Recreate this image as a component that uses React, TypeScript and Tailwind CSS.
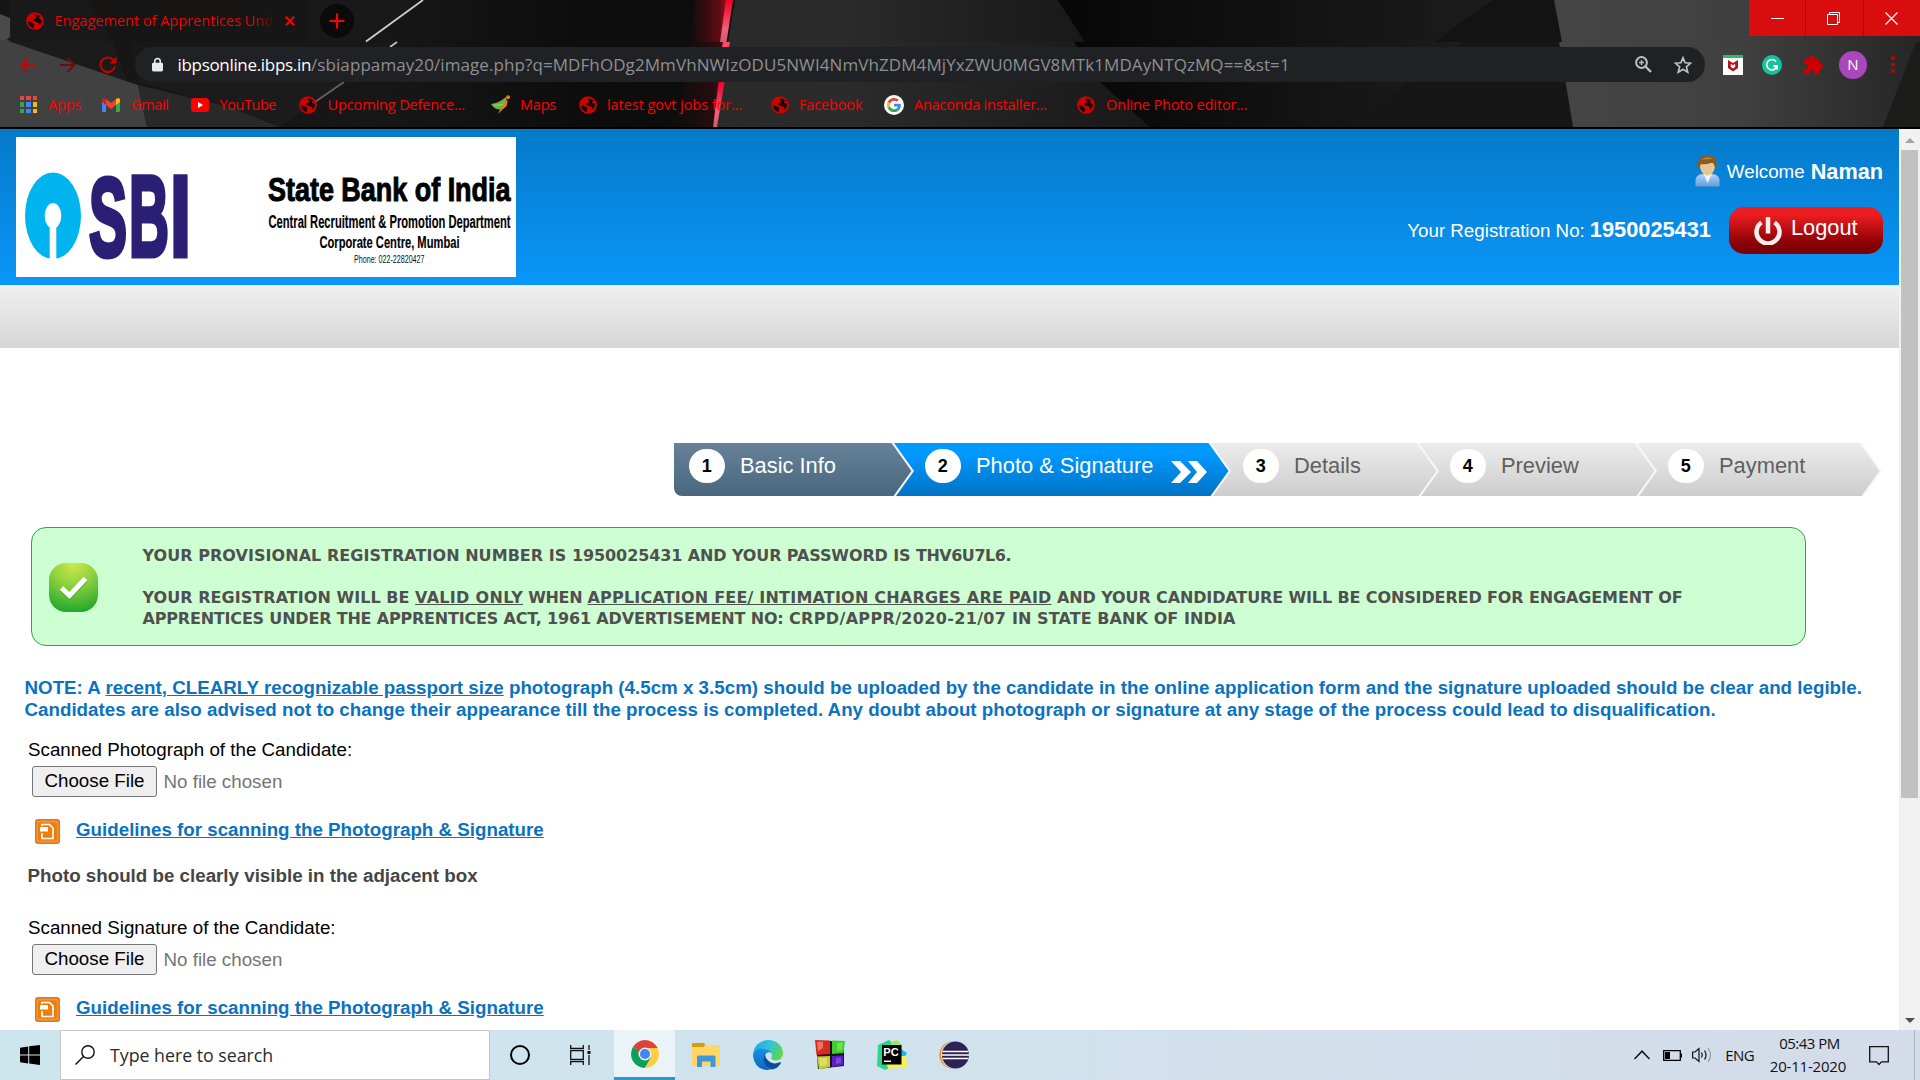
import type { ReactNode } from "react";

const ui = "font-['Open_Sans','Noto_Sans',sans-serif]";

function Globe() {
  return (
    <svg viewBox="0 0 18 18" className="h-[18px] w-[18px] shrink-0">
      <circle cx="9" cy="9" r="8.8" fill="#cf0000" />
      <path d="M8.8 2.4 L12.6 3 L14.6 5 L12.8 5.4 L13.6 7.2 L16 8 L15.400 11 L13.6 13.6 L12.8 11.4 L11 10 L8.2 9.4 L6.8 8.2 L8.4 6.8 L10.2 6.6 L9.6 4.6 Z" fill="#140808" />
      <path d="M1.8 9 L4.4 9.800 L6.8 11 L8.6 12.6 L7.8 14 L7.4 16.200 L5 15 L2.8 12.8 Z" fill="#140808" />
    </svg>
  );
}

function TopArt() {
  return (
    <svg viewBox="0 0 1920 127" preserveAspectRatio="none" className="absolute inset-0 h-[127px] w-full">
      <defs>
        <linearGradient id="base" x1="0" x2="1">
          <stop offset="0" stopColor="#161514" />
          <stop offset=".2" stopColor="#181717" />
          <stop offset=".3" stopColor="#0e0d0d" />
          <stop offset="1" stopColor="#0a0a0a" />
        </linearGradient>
        <linearGradient id="mid" x1="0" x2="1">
          <stop offset="0" stopColor="#2a2a2a" />
          <stop offset=".3" stopColor="#2b2b2b" />
          <stop offset="1" stopColor="#181818" />
        </linearGradient>
        <linearGradient id="glow" x1="0" x2="1">
          <stop offset="0" stopColor="#7a0b14" stopOpacity="0" />
          <stop offset=".75" stopColor="#7a0b14" stopOpacity=".75" />
          <stop offset="1" stopColor="#c01020" />
        </linearGradient>
        <linearGradient id="neon" x1="0" x2="0" y1="0" y2="1">
          <stop offset="0" stopColor="#f5002a" />
          <stop offset=".32" stopColor="#f02a4a" />
          <stop offset=".7" stopColor="#f06078" />
          <stop offset="1" stopColor="#d05a70" />
        </linearGradient>
        <linearGradient id="slate" x1="0" x2="1">
          <stop offset="0" stopColor="#454545" />
          <stop offset=".5" stopColor="#404040" />
          <stop offset="1" stopColor="#262626" />
        </linearGradient>
        <linearGradient id="shade" x1="0" x2="1">
          <stop offset="0" stopColor="#070707" />
          <stop offset="1" stopColor="#1c1c1c" />
        </linearGradient>
      </defs>
      <rect width="1920" height="127" fill="url(#base)" />
      <path d="M10 0H88L112 42H10Z" fill="#1a1919" />
      <path d="M0 14L10 18V36Q9 41 0 41Z" fill="#4a4a4a" />
      <path d="M0 40L8 40L138 85L147 127H0Z" fill="#414141" />
      <path d="M112 42L127 80L138 85L8 41Z" fill="#1c1b1b" />
      <path d="M138 85L230 107L280 127H147Z" fill="#292929" />
      <path d="M130 42H398L345 82H138Z" fill="#191818" />
      <path d="M310 42V12Q310 0 300 0H423L366 42Z" fill="#1a1919" />
      <path d="M138 82H344L280 127L230 107Z" fill="#1c1b1b" />
      <path d="M423 0L366 41.500" stroke="#d0d0d0" strokeWidth="1.800" />
      <path d="M397 42L390 47" stroke="#c0c0c0" strokeWidth="1.800" />
      <path d="M344 82L315 102" stroke="#666" strokeWidth="1.600" />
      <path d="M695 0H729L721 42H690Z" fill="url(#glow)" />
      <path d="M692 42H725L712 127H675Z" fill="url(#glow)" opacity=".3" />
      <path d="M735 0H1058L1085 42H728Z" fill="url(#mid)" />
      <path d="M729 42H1074L1100 82L1150 127H716Z" fill="url(#mid)" />
      <path d="M1058 0H1493L1435 42H1085Z" fill="url(#shade)" />
      <path d="M1074 42H1465L1348 127H1150L1100 82Z" fill="url(#shade)" />
      <path d="M726 0H733L726.500 42H720Z" fill="url(#neon)" />
      <path d="M723 42H730L729 47H722Z" fill="#ff4a6a" />
      <path d="M718.500 82H724.500L717 127H713Z" fill="url(#neon)" />
      <path d="M1493 0H1554L1562 42H1435Z" fill="#131313" />
      <path d="M1465 42H1559L1573 127H1348Z" fill="#161616" />
      <path d="M1554 0H1920V42H1562Z" fill="url(#slate)" />
      <path d="M1559 42H1920V127H1573Z" fill="url(#slate)" />
      <path d="M1916 42H1920V127H1883Z" fill="#1c1c1b" />
    </svg>
  );
}

function AppsIcon() {
  const c = ["#e8453c", "#e8453c", "#e8453c", "#30a853", "#4285f4", "#fbbc05", "#30a853", "#4285f4", "#fbbc05"];
  return (
    <span className="grid h-[17px] w-[17px] grid-cols-3 gap-[2px]">
      {c.map((x, i) => (
        <span key={i} style={{ background: x }} />
      ))}
    </span>
  );
}

function GmailIcon() {
  return (
    <svg viewBox="0 0 18 14" className="h-[14px] w-[18px]">
      <path d="M0 2V13a1 1 0 0 0 1 1H4V5Z" fill="#4285f4" />
      <path d="M18 2V13a1 1 0 0 1-1 1H14V5Z" fill="#34a853" />
      <path d="M14 1L16 0Q18 0 18 2V4L14 7Z" fill="#fbbc04" />
      <path d="M4 1L2 0Q0 0 0 2V4L4 7Z" fill="#c5221f" />
      <path d="M4 1L9 5L14 1V7L9 11L4 7Z" fill="#ea4335" />
    </svg>
  );
}

function YouTubeIcon() {
  return (
    <svg viewBox="0 0 18 14" className="h-[14px] w-[18px]">
      <rect width="18" height="14" rx="3" fill="#f00" />
      <path d="M7 4L12 7L7 10Z" fill="#fff" />
    </svg>
  );
}

function MapsIcon() {
  return (
    <svg viewBox="0 0 20 20" className="h-5 w-5">
      <path d="M0 9Q8 8 15 2Q16 10 11 14Q4 16 0 9Z" fill="#6db33f" />
      <path d="M16 4Q18 11 12 14L7 19Q9 14 12 11Q14 8 16 4Z" fill="#f0761c" />
      <circle cx="17" cy="2.200" r="2" fill="#f0761c" />
      <path d="M3 10Q8 11 12 9" stroke="#a8d46a" fill="none" />
    </svg>
  );
}

function GoogleIcon() {
  return (
    <svg viewBox="0 0 48 48" className="h-5 w-5">
      <circle cx="24" cy="24" r="24" fill="#fff" />
      <g transform="translate(7 7) scale(.71)">
        <path fill="#EA4335" d="M24 9.500c3.540 0 6.710 1.220 9.210 3.600l6.850-6.850C35.900 2.380 30.470 0 24 0 14.620 0 6.510 5.380 2.560 13.220l7.980 6.190C12.430 13.720 17.740 9.500 24 9.500z" />
        <path fill="#4285F4" d="M46.980 24.550c0-1.570-.15-3.090-.38-4.550H24v9.020h12.940c-.58 2.960-2.260 5.480-4.780 7.180l7.730 6c4.510-4.180 7.090-10.360 7.090-17.650z" />
        <path fill="#FBBC05" d="M10.530 28.590c-.48-1.450-.76-2.990-.76-4.590s.27-3.140.76-4.590l-7.980-6.190C.92 16.460 0 20.120 0 24c0 3.880.92 7.540 2.560 10.780l7.970-6.190z" />
        <path fill="#34A853" d="M24 48c6.480 0 11.930-2.130 15.890-5.810l-7.730-6c-2.150 1.450-4.920 2.300-8.160 2.300-6.260 0-11.570-4.220-13.470-9.910l-7.980 6.190C6.510 42.620 14.620 48 24 48z" />
      </g>
    </svg>
  );
}

const bookmarks: { t: string; w: string; g: string; k: string; icon: ReactNode }[] = [
  { t: "Apps", w: "w-[82px]", g: "w-[28px]", k: "tracking-[-0.2px]", icon: <AppsIcon /> },
  { t: "Gmail", w: "w-[89px]", g: "w-[29px]", k: "tracking-[-0.36px]", icon: <GmailIcon /> },
  { t: "YouTube", w: "w-[108px]", g: "w-[28.500px]", k: "tracking-[-0.44px]", icon: <YouTubeIcon /> },
  { t: "Upcoming Defence...", w: "w-[192px]", g: "w-[28.500px]", k: "tracking-[-0.12px]", icon: <Globe /> },
  { t: "Maps", w: "w-[88px]", g: "w-[29px]", k: "tracking-[-0.2px]", icon: <MapsIcon /> },
  { t: "latest govt jobs for...", w: "w-[192px]", g: "w-[28px]", k: "tracking-[-0.05px]", icon: <Globe /> },
  { t: "Facebook", w: "w-[113px]", g: "w-[28px]", k: "tracking-[-0.15px]", icon: <Globe /> },
  { t: "Anaconda installer...", w: "w-[193px]", g: "w-[30px]", k: "tracking-[-0.2px]", icon: <GoogleIcon /> },
  { t: "Online Photo editor...", w: "w-[200px]", g: "w-[29px]", k: "tracking-[-0.13px]", icon: <Globe /> },
];

function BrowserChrome() {
  return (
    <header className={"relative h-[129px] shrink-0 overflow-hidden bg-black text-[#ff0000] " + ui}>
      <TopArt />
      <div className="relative flex h-[42px] items-start">
        <div className="ml-[26px] flex h-[42px] w-[284px] items-center">
          <Globe />
          <span className="ml-[11px] w-[220px] overflow-hidden whitespace-nowrap text-[14.500px] [mask-image:linear-gradient(to_right,#000_90%,transparent_100%)]">
            Engagement of Apprentices Under
          </span>
          <svg viewBox="0 0 10 10" className="ml-[10px] h-[10px] w-[10px]">
            <path d="M.8 .8L9.200 9.200M9.200 .8L.8 9.200" stroke="#ff0000" strokeWidth="2" />
          </svg>
        </div>
        <div className="ml-[10px] mt-1 flex h-[34px] w-[34px] items-center justify-center rounded-full bg-[#0b0a0a]">
          <svg viewBox="0 0 16 16" className="h-4 w-4">
            <path d="M8 .5V15.500M.5 8H15.500" stroke="#ff0000" strokeWidth="2.200" />
          </svg>
        </div>
        <div className="ml-auto flex h-9 gap-px">
          <div className="flex w-14 items-center justify-center bg-[#d90d0d]">
            <span className="h-px w-[13px] bg-white" />
          </div>
          <div className="flex w-[57px] items-center justify-center bg-[#d90d0d] pr-[2px]">
            <svg viewBox="0 0 13 13" className="h-[13px] w-[13px]">
              <path d="M.5 2.500H10.500V12.500H.5ZM2.500 2.500V.5H12.500V10.500H10.500" fill="none" stroke="#fff" />
            </svg>
          </div>
          <div className="flex w-14 items-center justify-center bg-[#d90d0d] pr-[2px]">
            <svg viewBox="0 0 13 13" className="h-[13px] w-[13px]">
              <path d="M.5 .5L12.500 12.500M12.500 .5L.5 12.500" stroke="#fff" strokeWidth="1.200" />
            </svg>
          </div>
        </div>
      </div>
      <div className="relative mt-[5px] flex h-[35px] items-center">
        <svg viewBox="0 0 16 16" className="ml-5 h-4 w-4">
          <path d="M16 8H1.500M8.500 1L1.500 8L8.500 15" fill="none" stroke="#cc0000" strokeWidth="2" />
        </svg>
        <svg viewBox="0 0 16 16" className="ml-6 h-4 w-4">
          <path d="M0 8H14.500M7.500 1L14.500 8L7.500 15" fill="none" stroke="#6d0d0d" strokeWidth="2" />
        </svg>
        <svg viewBox="0 0 18 18" className="ml-[23px] h-[18px] w-[18px]">
          <path d="M15.800 10.500A7.200 7.200 0 1 1 14.200 4" fill="none" stroke="#cc0000" strokeWidth="2" />
          <path d="M17.500 .5V7.500H10.500Z" fill="#cc0000" />
        </svg>
        <div className="ml-[18px] flex h-[35px] w-[1570px] items-center rounded-full bg-[#202124]">
          <svg viewBox="0 0 12 15" className="ml-[17px] h-[15px] w-[11px]">
            <path d="M3 6V4a3 3 0 0 1 6 0V6" fill="none" stroke="#e8eaed" strokeWidth="1.700" />
            <rect y="5.500" width="12" height="9.500" rx="1.500" fill="#e8eaed" />
          </svg>
          <span className="ml-[14.500px] whitespace-nowrap text-[17px] tracking-[-0.32px] text-white">ibpsonline.ibps.in</span>
          <span className="whitespace-nowrap text-[17px] tracking-[0.085px] text-[#8e9093]">
            /sbiappamay20/image.php?q=MDFhODg2MmVhNWIzODU5NWI4NmVhZDM4MjYxZWU0MGV8MTk1MDAyNTQzMQ==&amp;st=1
          </span>
          <svg viewBox="0 0 17 17" className="ml-auto h-[17px] w-[17px]" fill="none" stroke="#bdbfc2">
            <circle cx="6.500" cy="6.500" r="5.400" strokeWidth="2" />
            <path d="M10.500 10.500L16 16" strokeWidth="2.400" />
            <path d="M4 6.500H9M6.500 4V9" strokeWidth="1.400" />
          </svg>
          <svg viewBox="0 0 18 18" className="ml-[22px] mr-[13.500px] h-[18px] w-[18px]" fill="none" stroke="#bdbfc2" strokeWidth="1.700">
            <path d="M9 1.800L11.100 6.800L16.600 7.200L12.400 10.800L13.700 16.100L9 13.200L4.300 16.100L5.600 10.800L1.400 7.200L6.900 6.800Z" />
          </svg>
        </div>
        <svg viewBox="0 0 20 20" className="ml-[17.500px] h-5 w-5">
          <rect width="20" height="20" fill="#fff" />
          <rect width="20" height="3" fill="#1fc46a" />
          <path d="M5 5L10 8L15 5V13L10 16.500L5 13ZM7.800 8.800V12L10 13.400L12.200 12V8.800L10 10.200Z" fill="#b5121b" fillRule="evenodd" />
        </svg>
        <svg viewBox="0 0 20 20" className="ml-[19.500px] h-5 w-5">
          <circle cx="10" cy="10" r="10" fill="#15c39a" />
          <path d="M14 6.500A5.200 5.200 0 1 0 15 10.800H11.200M15 10.800V14.500" fill="none" stroke="#fff" strokeWidth="1.700" />
        </svg>
        <svg viewBox="0 0 24 24" className="ml-5 h-[22px] w-[22px]">
          <path d="M20.500 11H19V7c0-1.100-.9-2-2-2h-4V3.500a2.500 2.500 0 0 0-5 0V5H4c-1.100 0-2 .9-2 2v3.800h1.500a2.700 2.700 0 0 1 0 5.400H2V20c0 1.100.9 2 2 2h3.800v-1.500a2.700 2.700 0 0 1 5.400 0V22H17c1.100 0 2-.9 2-2v-4h1.500a2.500 2.500 0 0 0 0-5z" fill="#cc0000" />
        </svg>
        <div className="ml-[15px] flex h-7 w-7 items-center justify-center rounded-full bg-[#ab47bc] text-[15px] text-white">N</div>
        <div className="ml-6 flex flex-col gap-[3px]">
          <span className="h-[3.500px] w-[3.500px] rounded-full bg-[#cc0000]" />
          <span className="h-[3.500px] w-[3.500px] rounded-full bg-[#cc0000]" />
          <span className="h-[3.500px] w-[3.500px] rounded-full bg-[#cc0000]" />
        </div>
      </div>
      <nav className="relative flex h-[45px] items-center pl-5">
        {bookmarks.map((b) => (
          <div key={b.t} className={"flex shrink-0 items-center " + b.w}>
            <span className={"flex shrink-0 items-center " + b.g}>{b.icon}</span>
            <span className={"whitespace-nowrap text-[14.500px] leading-5 " + b.k}>{b.t}</span>
          </div>
        ))}
      </nav>
    </header>
  );
}

function BankLogo() {
  return (
    <svg viewBox="16 137 500 140" className="ml-4 mt-2 h-[140px] w-[500px] bg-white font-['Liberation_Sans',Arial,sans-serif]">
      <ellipse cx="53" cy="215.800" rx="28" ry="43.300" fill="#00b5ef" />
      <ellipse cx="53" cy="215.800" rx="8.300" ry="12.700" fill="#fff" />
      <rect x="49.700" y="222" width="6.600" height="38" fill="#fff" />
      <g fill="#2b1f75" stroke="#2b1f75" strokeWidth="5" fontWeight="700">
        <text x="89" y="255.500" textLength="38" lengthAdjust="spacingAndGlyphs" fontSize="112">S</text>
        <text x="129" y="255.500" textLength="40" lengthAdjust="spacingAndGlyphs" fontSize="115">B</text>
        <text x="170" y="255.500" textLength="21" lengthAdjust="spacingAndGlyphs" fontSize="115">I</text>
      </g>
      <text x="268" y="200.700" textLength="242.500" lengthAdjust="spacingAndGlyphs" fontWeight="700" fontSize="33" stroke="#000" strokeWidth="1">State Bank of India</text>
      <g stroke="#000" strokeWidth=".15">
        <text x="268.500" y="227.700" textLength="242" lengthAdjust="spacingAndGlyphs" fontWeight="700" fontSize="17.500">Central Recruitment &amp; Promotion Department</text>
        <text x="319.500" y="248" textLength="140" lengthAdjust="spacingAndGlyphs" fontWeight="700" fontSize="17">Corporate Centre, Mumbai</text>
      </g>
      <text x="354" y="262.700" textLength="70.500" lengthAdjust="spacingAndGlyphs" fontSize="11" fill="#111">Phone: 022-22820427</text>
    </svg>
  );
}

function PersonIcon() {
  return (
    <svg viewBox="0 0 25 33" className="h-[33px] w-[25px]">
      <defs>
        <linearGradient id="shirt" x1="0" x2="0" y1="0" y2="1">
          <stop offset="0" stopColor="#b5d6f7" />
          <stop offset="1" stopColor="#5a9be0" />
        </linearGradient>
      </defs>
      <path d="M0 32V25Q1 19 8 18.500H17Q24 19 25 25V32Z" fill="url(#shirt)" stroke="#2b6fb5" strokeWidth=".8" />
      <path d="M8.500 18.500L12.500 28L17 18.500Z" fill="#f3f7fb" />
      <path d="M4.500 8Q5 17 9 19Q12.500 22 16 19Q20 17 20.500 8Z" fill="#e8c793" />
      <path d="M3 12Q1.500 1 12.500 .5Q23 0 21.500 12L20 15Q20 9 17 7.500Q12 10 6 9Q4.500 11 4.800 15Z" fill="#8a5a20" />
      <path d="M6 5Q12 0 18 4Q12 4 6 5Z" fill="#b88238" />
    </svg>
  );
}

function SiteHeader() {
  return (
    <div className="flex h-[156px] justify-between bg-linear-to-b from-[#057ac8] to-[#0a96fa]">
      <BankLogo />
      <div className="mr-4 flex flex-col items-end text-[18.750px] text-white">
        <div className="mt-[26px] flex h-[33px] items-center">
          <PersonIcon />
          <span className="ml-[7px] mt-px leading-[22px]">Welcome</span>
          <span className="ml-[6px] mt-px text-[21.700px] font-bold leading-[22px]">Naman</span>
        </div>
        <div className="mt-[19px] flex h-[47px] items-center">
          <span className="leading-[22px]">Your Registration No:</span>
          <span className="ml-[5px] mr-[18px] pb-[2px] text-[21.800px] font-bold leading-[22px]">1950025431</span>
          <div className="flex h-[47px] w-[154px] items-center rounded-[15px] bg-linear-to-b from-[#ee1d20] from-15% to-[#7f0004] to-85%">
            <svg viewBox="0 0 28 28" className="ml-[25px] h-7 w-7" fill="none" stroke="#f4eeee">
              <path d="M7.500 5.500A11.500 11.500 0 1 0 20.500 5.500" strokeWidth="4.500" />
              <path d="M14 0V16.500" strokeWidth="4.500" />
            </svg>
            <span className="ml-[9px] pb-[5px] text-[21.800px] leading-6">Logout</span>
          </div>
        </div>
      </div>
    </div>
  );
}

const arrow =
  "[clip-path:polygon(0_0,calc(100%-20px)_0,100%_53%,calc(100%-18px)_100%,0_100%)]";

const steps = [
  { n: 1, t: "Basic Info", box: "z-50 w-[240px] rounded-bl-lg", pad: "pl-[15px]", tone: "bg-linear-to-b from-[#67829a] to-[#48677d] text-white rounded-bl-lg" },
  { n: 2, t: "Photo & Signature", box: "z-40 -ml-6 w-[341px]", pad: "pl-[35px]", tone: "bg-linear-to-b from-[#0099ff] from-20% to-[#0073c4] text-white" },
  { n: 3, t: "Details", box: "z-30 -ml-6 w-[232px]", pad: "pl-[36px]", tone: "bg-linear-to-b from-[#ececec] to-[#cdcdcd] text-[#5f5f5f]" },
  { n: 4, t: "Preview", box: "z-20 -ml-6 w-[242px]", pad: "pl-[35px]", tone: "bg-linear-to-b from-[#ececec] to-[#cdcdcd] text-[#5f5f5f]" },
  { n: 5, t: "Payment", box: "z-10 -ml-6 w-[249px]", pad: "pl-[35px]", tone: "bg-linear-to-b from-[#ececec] to-[#cdcdcd] text-[#5f5f5f]" },
];

function Steps() {
  return (
    <div className="ml-[674px] mt-[95px] flex h-[53px]">
      {steps.map((s) => (
        <div key={s.n} className={"relative shrink-0 bg-[#f6f8f9] pr-[2.500px] " + arrow + " " + s.box}>
          <div className={"flex h-full items-start " + arrow + " " + s.tone + " " + s.pad}>
            <div className="flex h-[46px] items-center">
              <span className="flex h-[34px] w-[35.500px] items-center justify-center rounded-full bg-white text-lg font-bold text-black">{s.n}</span>
              <span className="ml-[15.500px] whitespace-nowrap text-[21.875px] leading-6">{s.t}</span>
            </div>
            {s.n === 2 && (
              <svg viewBox="0 0 36 22" className="ml-[18px] mt-[18px] h-[22px] w-9">
                <path d="M0 0H9L20 11L9 22H0L10 11ZM17 0H26L36 11L26 22H17L26 11Z" fill="#fff" />
              </svg>
            )}
          </div>
        </div>
      ))}
    </div>
  );
}

function Upload({ label }: { label: string }) {
  return (
    <section className="ml-[28px]">
      <p className="leading-[22px] text-black">{label}</p>
      <div className="mt-[5px] flex h-[31px] items-center">
        <button className="ml-1 h-[31px] w-[125px] rounded-[3px] border border-[#767676] bg-[#efefef] pb-[2px] text-black">Choose File</button>
        <span className="ml-[6.500px] pt-px text-[#757575]">No file chosen</span>
      </div>
      <div className="mt-[22px] flex h-[25px] items-center">
        <svg viewBox="0 0 25 25" className="ml-[7px] h-[25px] w-[25px]">
          <rect width="25" height="25" rx="3" fill="#dd7a1c" />
          <rect x="1.500" y="1.500" width="22" height="22" rx="2" fill="#ef9440" />
          <rect x="3" y="3.500" width="19" height="18" rx="1.500" fill="#f07d05" />
          <path d="M7 7V5.500H14.500L18 9V19.500H7V14" fill="none" stroke="#fff" strokeWidth="1.700" />
          <rect x="5" y="8" width="8" height="4.500" fill="#fff" />
        </svg>
        <a className="ml-4 pb-[3px] font-bold text-[#0b72bf] underline">Guidelines for scanning the Photograph &amp; Signature</a>
      </div>
    </section>
  );
}

function Page() {
  return (
    <main className="w-[1899px] overflow-hidden bg-white font-['Liberation_Sans',Arial,sans-serif] text-[18.750px]">
      <SiteHeader />
      <div className="h-[63px] bg-linear-to-b from-[#f0f0f0] to-[#d6d6d6]" />
      <Steps />
      <div className="ml-[31px] mt-[31px] flex h-[119px] w-[1775px] rounded-[15px] border border-[#3f9a4d] bg-[#ceffd2]">
        <svg viewBox="0 0 49 49" className="ml-[17px] mt-[35px] h-[49px] w-[49px]">
          <defs>
            <radialGradient id="ok" cx=".5" cy="0" r="1">
              <stop offset="0" stopColor="#d3e84e" />
              <stop offset=".45" stopColor="#8fd23f" />
              <stop offset="1" stopColor="#25a82c" />
            </radialGradient>
          </defs>
          <rect width="49" height="49" rx="17" fill="url(#ok)" />
          <path d="M12.500 26L20.500 34L37 16.500" fill="none" stroke="#3b8f2a" strokeOpacity=".5" strokeWidth="5" />
          <path d="M12.500 25L20.500 32.500L36.500 15.500" fill="none" stroke="#fff" strokeWidth="5" />
        </svg>
        <div className="ml-[44.500px] mt-[17px] whitespace-nowrap font-['DejaVu_Sans',Verdana,sans-serif] text-base font-bold leading-[21px] text-[#505050]">
          <p>
            <span className="tracking-[0.045px]">YOUR PROVISIONAL REGISTRATION NUMBER IS </span>
            <span className="tracking-[-0.11px]">1950025431 AND YOUR PASSWORD IS </span>
            <span className="tracking-[-0.48px]">THV6U7L6.</span>
          </p>
          <p className="mt-[21px]">
            <span className="tracking-[0.045px]">YOUR REGISTRATION WILL BE </span>
            <u className="tracking-[0.3px]">VALID ONLY</u>
            <span className="tracking-[-0.35px]"> WHEN </span>
            <u className="tracking-[0.2px]">APPLICATION FEE/ INTIMATION CHARGES ARE PAID</u>
            <span className="tracking-[-0.12px]"> AND YOUR CANDIDATURE WILL BE CONSIDERED FOR ENGAGEMENT OF</span>
          </p>
          <p>
            <span className="tracking-[-0.19px]">APPRENTICES UNDER THE APPRENTICES ACT, </span>
            <span className="tracking-[-0.16px]">1961 ADVERTISEMENT NO: </span>
            <span className="tracking-[0.34px]">CRPD/APPR/2020-21/07</span>
            <span className="tracking-[0.08px]"> IN STATE BANK OF INDIA</span>
          </p>
        </div>
      </div>
      <p className="ml-[24.500px] mt-[31px] whitespace-nowrap font-bold leading-[22px] tracking-[0.005px] text-[#0b72bf]">
        NOTE: A <u>recent, CLEARLY recognizable passport size</u> photograph (4.5cm x 3.5cm) should be uploaded by the candidate in the online application form and the signature uploaded should be clear and legible.
        <br />
        Candidates are also advised not to change their appearance till the process is completed. Any doubt about photograph or signature at any stage of the process could lead to disqualification.
      </p>
      <div className="mt-[18px]">
        <Upload label="Scanned Photograph of the Candidate:" />
        <p className="ml-[27.500px] mt-[21px] font-bold leading-[22px] text-[#454545]">Photo should be clearly visible in the adjacent box</p>
        <div className="mt-[30px]">
          <Upload label="Scanned Signature of the Candidate:" />
        </div>
      </div>
    </main>
  );
}

function Scrollbar() {
  return (
    <div className="flex w-[21px] flex-col items-center bg-[#f1f1f1]">
      <svg viewBox="0 0 10 5" className="mt-[9px] h-[5px] w-[10px]">
        <path d="M0 5L5 0L10 5Z" fill="#a3a3a3" />
      </svg>
      <div className="mt-[7px] h-[648px] w-[17px] bg-[#c1c1c1]" />
      <svg viewBox="0 0 10 5" className="mb-[7px] mt-auto h-[5px] w-[10px]">
        <path d="M0 0L5 5L10 0Z" fill="#505050" />
      </svg>
    </div>
  );
}

function ChromeIcon() {
  return (
    <svg viewBox="0 0 28 28" className="h-7 w-7">
      <path d="M14 14L1.880 7A14 14 0 0 1 26.120 7Z" fill="#dc4437" />
      <path d="M14 14L1.880 7A14 14 0 0 0 14 28L20 17.500Z" fill="#0f9d58" />
      <path d="M14 14L20.500 17L14 28A14 14 0 0 0 26.600 8H14Z" fill="#ffcd40" />
      <path d="M14 8H26.600L26.120 7H6V14Z" fill="#dc4437" />
      <circle cx="14" cy="14" r="6.500" fill="#f1f1f1" />
      <circle cx="14" cy="14" r="5" fill="#4285f4" />
    </svg>
  );
}

function FolderIcon() {
  return (
    <svg viewBox="0 0 28 24" className="h-6 w-7">
      <path d="M0 1Q0 0 1 0H12L13.500 2L12 4H0Z" fill="#dc9a0a" />
      <path d="M0 4H11L13.500 2H27Q28 2 28 3V22Q28 23 27 23H0Z" fill="#ffd766" />
      <path d="M5 24V14Q5 12.500 6.500 12.500H22Q23.500 12.500 23.500 14V24H18.500V18.500H10V24Z" fill="#3f97d9" />
    </svg>
  );
}

function EdgeIcon() {
  return (
    <svg viewBox="0 0 30 30" className="h-[30px] w-[30px]">
      <defs>
        <linearGradient id="edgeA" x1="0" x2="1" y1=".2" y2=".5">
          <stop offset="0" stopColor="#1fa5e8" />
          <stop offset=".5" stopColor="#2fc2df" />
          <stop offset="1" stopColor="#5fd84a" />
        </linearGradient>
        <linearGradient id="edgeB" x1="0" x2="0" y1="0" y2="1">
          <stop offset="0" stopColor="#1b8fe0" />
          <stop offset="1" stopColor="#0a66c4" />
        </linearGradient>
      </defs>
      <path d="M.3 13Q2 1 15 0Q28 .5 30 12.500Q30 20.500 22 20.500Q17.500 20 18.500 17.500Q19.500 15 18 12.500Q13 7 6 9.500Q2 11 .3 13Z" fill="url(#edgeA)" />
      <path d="M.3 13Q3 8.500 9 8.500Q16 8.800 18.500 13Q14 11 12 15Q9 23 17 29.800Q2 31 0 16Z" fill="url(#edgeB)" />
      <path d="M12.500 13Q8.500 20 13 26Q16 29.500 19 29.500Q25 28.500 28 23Q28 22 27 22.300Q20 25 15.500 21Q11 17 12.500 13Z" fill="#0c4f98" />
    </svg>
  );
}

function CubesIcon() {
  return (
    <svg viewBox="0 0 30 30" className="h-[30px] w-[30px]">
      <path d="M1 1L29 1L29 26L3 29Z" fill="#1a1414" />
      <path d="M0 0L15 .5V14L1.500 15Z" fill="#d62a22" />
      <path d="M2 2L8 1.500V8L3 11Z" fill="#ef7065" />
      <path d="M17 .5L30 1L28.500 13L17 14Z" fill="#42cc32" />
      <path d="M22 3L28 2.500L27 10L22 11Z" fill="#66e450" />
      <path d="M2 16.500L15 16V27L4 29.500Z" fill="#c8c934" />
      <path d="M4 18H12V25L5 26Z" fill="#dede62" />
      <path d="M17 16L28 15.500L28.500 25L17 27Z" fill="#5b1fc4" />
      <path d="M21 18L26 17.500V23L21 24Z" fill="#7a45e0" />
    </svg>
  );
}

function PyCharmIcon() {
  return (
    <svg viewBox="0 0 30 30" className="h-[30px] w-[30px] font-['Liberation_Sans',Arial,sans-serif]">
      <path d="M1 5L12 0L16 3V26L8 30L0 26Z" fill="#27d78b" />
      <path d="M14 2L20 0L25 5V12L14 10Z" fill="#9fe85a" />
      <path d="M24 9L30 13L27 18L24 16Z" fill="#12bce8" />
      <path d="M24 16L29 16L30 28L18 27L12 30L9 23Z" fill="#f8f24a" />
      <rect x="5" y="5" width="19.500" height="19.500" fill="#000" />
      <rect x="7" y="20.500" width="7" height="1.500" fill="#fff" />
      <text x="6.300" y="16.200" fontSize="11" fontWeight="700" fill="#fff" textLength="15.500" lengthAdjust="spacingAndGlyphs">PC</text>
    </svg>
  );
}

function EclipseIcon() {
  return (
    <svg viewBox="0 0 30 28" className="h-7 w-[30px]">
      <circle cx="14" cy="14" r="13.700" fill="#f7941e" />
      <circle cx="16" cy="14" r="14" fill="#d6e3ee" />
      <circle cx="16.500" cy="14" r="13.500" fill="#2c2255" />
      <path d="M3.500 10.500H29.500M3 14H30M3.500 17.500H29.500" stroke="#fff" strokeWidth="1.700" />
    </svg>
  );
}

function Taskbar() {
  return (
    <footer className={"flex h-[50px] shrink-0 items-center bg-linear-to-r from-[#cde6ed] via-[#d1e2ed] to-[#d4dbe9] text-[#111] " + ui}>
      <svg viewBox="0 0 20 20" className="ml-5 h-5 w-5">
        <path d="M0 2.700L8.200 1.500V9.500H0ZM9.200 1.300L20 0V9.500H9.200ZM0 10.500H8.200V18.500L0 17.300ZM9.200 10.500H20V20L9.200 18.600Z" />
      </svg>
      <div className="ml-5 flex h-[50px] w-[430px] items-center border border-[#c3c7c9] bg-white">
        <svg viewBox="0 0 20 20" className="ml-[14px] h-5 w-5" fill="none" stroke="#111" strokeWidth="1.400">
          <circle cx="13" cy="7" r="6.200" />
          <path d="M8.500 11.500L.5 19.500" />
        </svg>
        <span className="ml-[15px] text-[17.800px] tracking-[-0.02px] text-[#2b2b2b]">Type here to search</span>
      </div>
      <div className="ml-5 h-5 w-5 rounded-full border-[2.800px] border-black" />
      <svg viewBox="0 0 21 20" className="ml-[39.500px] h-5 w-[21px]" fill="none" stroke="#111" strokeWidth="1.300">
        <path d="M.7 0V3.500H13.300V0M.7 20V16.500H13.300V20M.7 5.700H13.300V14.300H.7ZM19 0V5M19 10V20" />
        <rect x="17.500" y="6" width="3" height="3" fill="#111" stroke="none" />
      </svg>
      <div className="ml-[23.500px] flex h-[50px] w-[61px] items-center justify-center border-b-[3px] border-[#2a96cf] bg-[#eaf4f8]">
        <ChromeIcon />
      </div>
      <div className="ml-[17px] flex items-center">
        <FolderIcon />
        <div className="ml-[33px]"><EdgeIcon /></div>
        <div className="ml-[32px]"><CubesIcon /></div>
        <div className="ml-[32px]"><PyCharmIcon /></div>
        <div className="ml-[32px]"><EclipseIcon /></div>
      </div>
      <div className="ml-auto mr-[5px] flex h-[50px] items-center border-r border-[#a9b3c2]">
        <svg viewBox="0 0 16 10" className="h-[10px] w-4" fill="none" stroke="#111" strokeWidth="1.500">
          <path d="M.5 9L8 1.200L15.500 9" />
        </svg>
        <svg viewBox="0 0 19 11" className="ml-[13px] h-[11px] w-[19px]">
          <path d="M.7 .7H17.300V10.300H.7Z" fill="none" stroke="#000" strokeWidth="1.300" />
          <rect x="2" y="2" width="5" height="7" />
          <rect x="18" y="3.500" width="1" height="4" />
        </svg>
        <svg viewBox="0 0 20 16" className="ml-[10px] h-4 w-5" fill="none" stroke="#111" strokeWidth="1.200">
          <path d="M.6 5H3L7 1.500V14.500L3 11H.6Z" />
          <path d="M9.500 5.500Q11 8 9.500 10.500M12.500 3.500Q15.500 8 12.500 12.500" />
          <path d="M16 1Q21 8 16 15" stroke="#8f959f" />
        </svg>
        <span className="ml-[13px] text-[15px] tracking-[-0.6px]">ENG</span>
        <div className="ml-[15px] flex w-[78px] flex-col items-center text-[15px] leading-[23px]">
          <span className="pl-[3px] tracking-[-0.5px]">05:43 PM</span>
          <span className="tracking-[-0.2px]">20-11-2020</span>
        </div>
        <svg viewBox="0 0 20 20" className="ml-[22px] mr-[25px] mt-px h-5 w-5" fill="none" stroke="#111" strokeWidth="1.300">
          <path d="M.7 .7H19.300V15.800H12.500L10 18.500L7.500 15.800H.7Z" />
        </svg>
      </div>
    </footer>
  );
}

export default function App() {
  return (
    <div className="flex h-[1080px] w-[1920px] flex-col overflow-hidden">
      <BrowserChrome />
      <div className="flex h-[901px] overflow-hidden">
        <Page />
        <Scrollbar />
      </div>
      <Taskbar />
    </div>
  );
}
